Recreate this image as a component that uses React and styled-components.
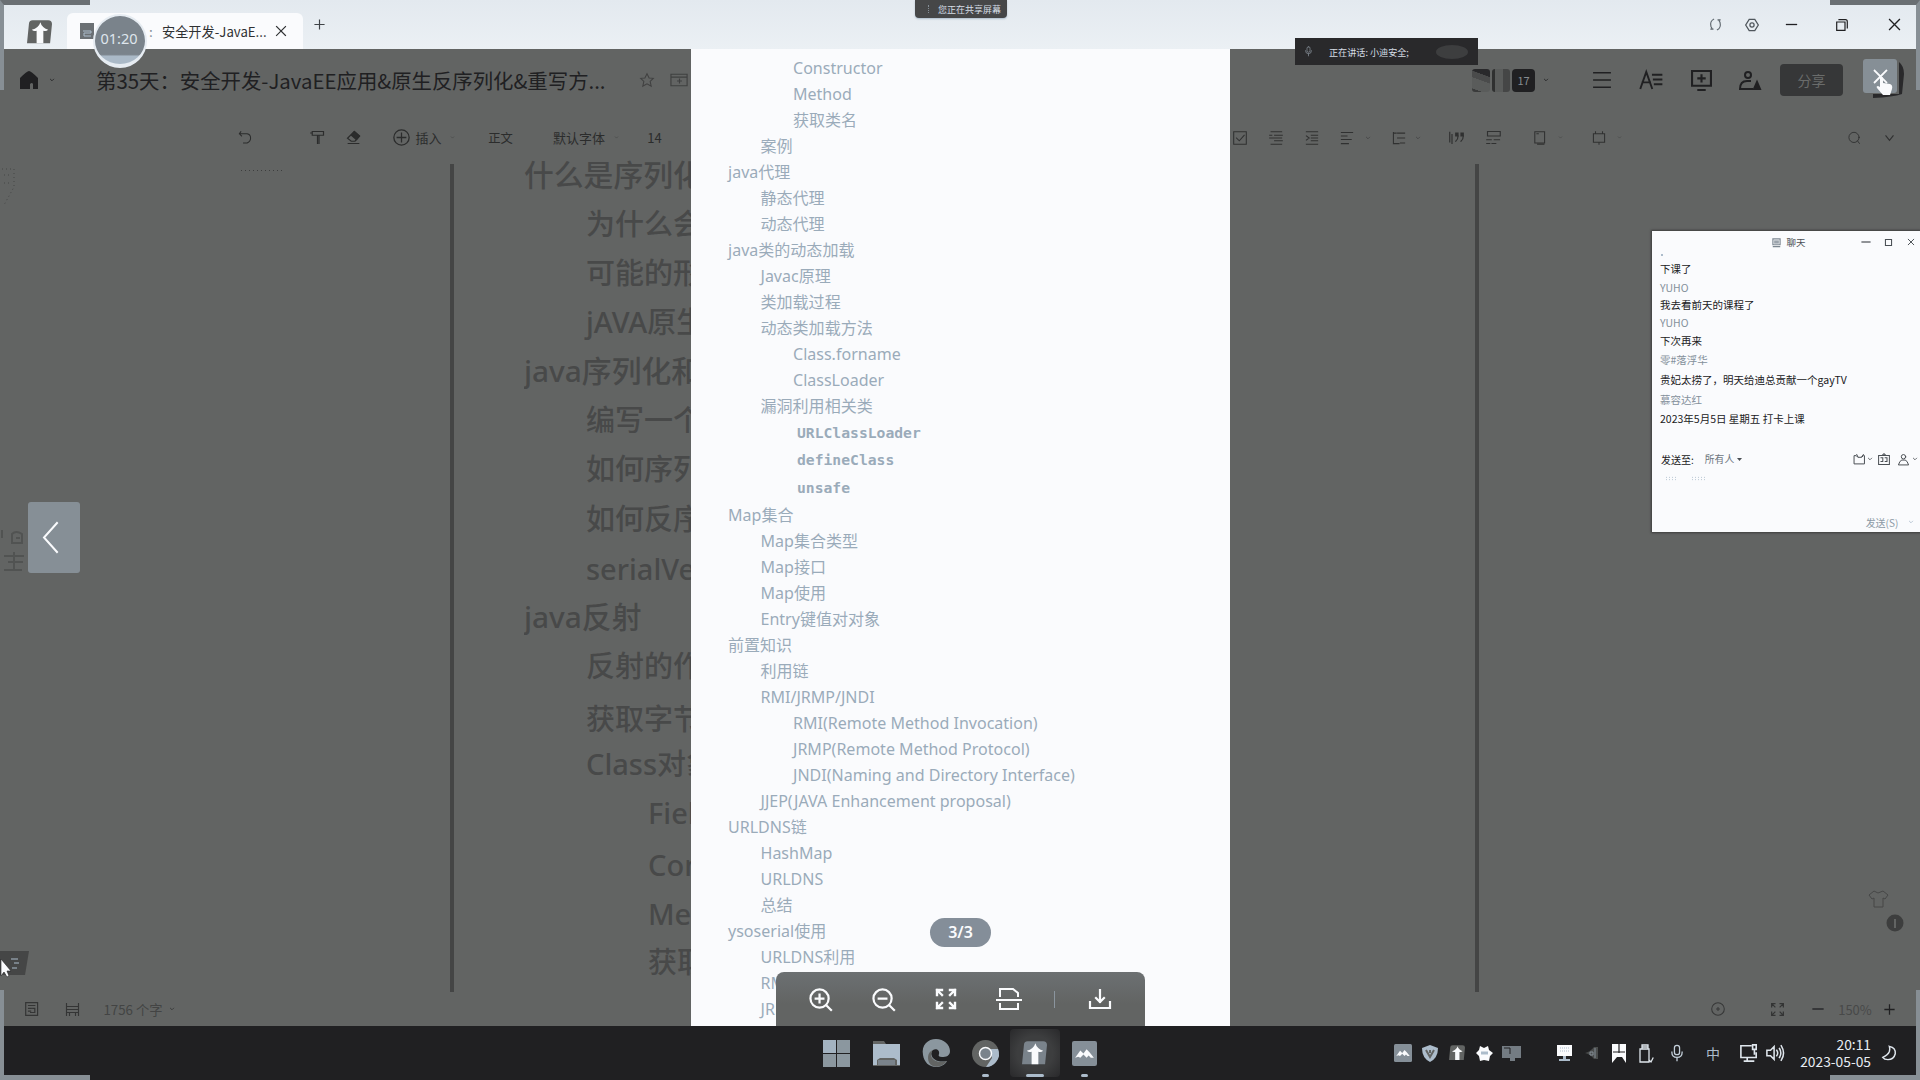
import React from "react";
import styled, { createGlobalStyle } from "styled-components";

const INK = "#202022";
const GRAY = "#626463";
const MIST = "#acbccb";
const PAPER = "#fafbfd";

const GlobalStyle = createGlobalStyle`
  * { box-sizing: border-box; }
  html, body { margin: 0; padding: 0; overflow: hidden; }
  body { font-family: "Noto Sans", "Noto Sans CJK SC", sans-serif; color: ${INK}; }
  svg { display: block; flex: none; overflow: visible; }
`;

const Screen = styled.div`
  position: relative;
  width: 1920px;
  height: 1080px;
  overflow: hidden;
  display: grid;
  grid-template-rows: 49px 977px 54px;
  background: ${GRAY};
`;

const Slot = styled.span`
  flex: none;
  display: flex;
  align-items: center;
  justify-content: ${(p) => p.$align || "center"};
  width: ${(p) => p.$w}px;
  margin-left: ${(p) => p.$gap || 0}px;
  font-size: ${(p) => p.$size || 13}px;
  color: ${(p) => p.$color || "inherit"};
  white-space: nowrap;
`;

const TitleBar = styled.header`
  display: flex;
  align-items: flex-start;
  background: linear-gradient(#e3e9ef, #ebf0f4);
`;

const AppLogo = styled.div`
  margin: 20px 0 0 27px;
  width: 25px;
`;

const Tab = styled.div`
  margin: 13px 0 0 15px;
  width: 236px;
  height: 36px;
  padding-left: 13px;
  display: flex;
  align-items: center;
  border-radius: 6px 6px 0 0;
  background: ${PAPER};
  color: #2f3133;
  font-family: "Noto Sans CJK SC", sans-serif;
`;

const TitleTools = styled.div`
  display: flex;
  align-items: center;
  height: 49px;
  margin-left: ${(p) => p.$gap}px;
`;

const Workspace = styled.main`
  display: grid;
  grid-template-columns: 691px 539px 690px;
  min-height: 0;
`;

const Pane = styled.section`
  display: grid;
  grid-template-rows: 62px 53px 828px 34px;
  overflow: hidden;
  min-width: 0;
  font-family: "Noto Sans CJK SC", sans-serif;
`;

const Bar = styled.div`
  display: flex;
  align-items: center;
  padding-left: ${(p) => p.$pad}px;
  color: ${(p) => p.$color || INK};
`;

const DocBody = styled.div`
  display: flex;
  margin-left: ${(p) => p.$left}px;
  border-left: 4px solid #444545;
`;

const Outline = styled.div`
  flex: 1;
  min-width: 0;
  padding: 0 0 0 70px;
  margin-top: -14px;
`;

const OutlineRow = styled.div`
  height: 49px;
  line-height: 49px;
  padding-top: ${(p) => p.$drop || 0}px;
  padding-left: ${(p) => p.$level * 62}px;
  font-family: "Noto Sans", "Noto Sans CJK SC", sans-serif;
  font-size: ${(p) => (p.$level ? 29 : 29.8)}px;
  font-weight: 500;
  color: #484949;
  white-space: nowrap;
  overflow: hidden;
`;

const Sheet = styled.section`
  position: relative;
  background: ${PAPER};
  overflow: hidden;
  padding: 5.5px 0 0 37px;
`;

const TocRow = styled.div`
  height: ${(p) => (p.$code ? (p.$first ? 27 : 28) : 26)}px;
  line-height: ${(p) => (p.$code ? (p.$first ? 27 : 28) : 26)}px;
  padding-left: ${(p) => p.$level * 32.5 + (p.$code ? 4 : 0)}px;
  font-family: ${(p) =>
    p.$code
      ? '"DejaVu Sans Mono", monospace'
      : '"Noto Sans", "Noto Sans CJK SC", sans-serif'};
  font-size: ${(p) => (p.$code ? 14.7 : 16.05)}px;
  font-weight: ${(p) => (p.$code ? 700 : 400)};
  color: #9aabba;
  white-space: nowrap;
`;

const PageBadge = styled.div`
  position: absolute;
  left: 239px;
  top: 869px;
  width: 61px;
  height: 29px;
  line-height: 29px;
  border-radius: 15px;
  text-align: center;
  background: #848e99;
  color: ${PAPER};
  font-size: 16px;
  font-weight: 600;
`;

const ViewerBar = styled.div`
  position: absolute;
  left: 85px;
  bottom: 0;
  width: 369px;
  height: 54px;
  padding-left: 32px;
  display: flex;
  align-items: center;
  border-radius: 8px 8px 0 0;
  background: linear-gradient(#6c7072, ${GRAY} 60%);
  color: ${PAPER};
`;

const Divider = styled.span`
  flex: none;
  width: 1px;
  height: 17px;
  margin-left: 32px;
  background: #8b959e;
`;

const CountBox = styled.span`
  flex: none;
  width: 23px;
  height: 23px;
  line-height: 22px;
  border-radius: 4px;
  text-align: center;
  font-size: 11px;
  background: ${INK};
  color: #858b90;
`;

const Avatar = styled.span`
  flex: none;
  width: 18px;
  height: 23px;
  margin-right: 2px;
  border-radius: 3px;
  background: ${(p) => p.$fill};
`;

const ShareButton = styled.button`
  flex: none;
  width: 63px;
  height: 32px;
  margin-left: 19px;
  border: 0;
  padding: 0;
  border-radius: 4px;
  background: #363738;
  color: #6a6c6b;
  font: 14px "Noto Sans CJK SC", sans-serif;
`;

const OverlayButton = styled.button`
  position: absolute;
  left: ${(p) => p.$x}px;
  top: ${(p) => p.$y}px;
  width: ${(p) => p.$w}px;
  height: ${(p) => p.$h}px;
  padding: 0 ${(p) => p.$inset || 0}px 0 0;
  border: 0;
  border-radius: 3px;
  background: #868f96;
  color: ${PAPER};
  display: flex;
  align-items: center;
  justify-content: center;
`;

const Floating = styled.div`
  position: absolute;
  left: ${(p) => p.$x}px;
  top: ${(p) => p.$y}px;
`;

const Corner = styled.div`
  position: absolute;
  width: 90px;
  height: 90px;
  border: 0 solid #878f95;
  ${(p) => (p.$top ? "top: 0; border-top-width: 5px; border-top-color: #6a6f73;" : "bottom: 0; border-bottom-width: 5px;")}
  ${(p) => (p.$left ? "left: 0; border-left-width: 4px;" : "right: 0; border-right-width: 4px;")}
`;

const ShareNotice = styled.div`
  position: absolute;
  left: 915px;
  top: 0;
  width: 92px;
  height: 18px;
  padding-left: 13px;
  display: flex;
  align-items: center;
  gap: 7px;
  border-radius: 0 0 4px 4px;
  background: #464748;
  box-shadow: 0 1px 2px ${MIST};
  color: #d5dde5;
  font: 9px "Noto Sans CJK SC", sans-serif;
  white-space: nowrap;
`;

const NoticeDots = styled.span`
  flex: none;
  width: 3px;
  height: 8px;
  border-left: 1px dotted #858f98;
`;

const Speaker = styled.div`
  position: absolute;
  left: 1295px;
  top: 38px;
  width: 183px;
  height: 27px;
  padding-left: 8px;
  display: flex;
  align-items: center;
  background: #29292b;
  color: #d5dde5;
  font-family: "Noto Sans CJK SC", sans-serif;
`;

const Voice = styled.span`
  width: 32px;
  height: 14px;
  margin-left: 27px;
  border-radius: 50%;
  background: #3d3e3f;
`;

const Timer = styled.div`
  position: absolute;
  left: 93px;
  top: 14px;
  width: 54px;
  height: 54px;
  padding: 0 2px 4px 0;
  display: flex;
  align-items: center;
  justify-content: center;
  border: 2px solid #e6ecf2;
  border-bottom-width: 4px;
  border-radius: 50%;
  background: linear-gradient(#7a838b 80%, #aab9c7 84%);
  color: #dfe6ed;
  font-size: 14.5px;
`;

const Chat = styled.aside`
  position: absolute;
  left: 1652px;
  top: 231px;
  width: 268px;
  height: 301px;
  padding-left: 8px;
  background: ${PAPER};
  box-shadow: 0 0 2px 1px #3c3d3d;
  font-family: "Noto Sans CJK SC", sans-serif;
`;

const ChatHead = styled.div`
  position: relative;
  display: flex;
  align-items: center;
  height: 22px;
  padding-left: 111px;
  color: #4a4f54;
`;

const ChatLine = styled.p`
  margin: 0;
  height: ${(p) => p.$h || 18}px;
  line-height: ${(p) => p.$h || 18}px;
  font-size: 10.5px;
  color: ${(p) => (p.$name ? "#84909b" : INK)};
  white-space: nowrap;
`;

const ChatLog = styled.div`
  height: 194px;
`;

const Crumb = styled.div`
  width: 2px;
  height: 2px;
  margin: 1px 0 3px 1px;
  background: ${MIST};
`;

const ChatTools = styled.div`
  display: flex;
  align-items: center;
  height: 22px;
  color: #4a4f54;
`;

const Placeholder = styled.div`
  display: flex;
  gap: 14px;
  height: 41px;
  padding: 6px 0 0 5px;
`;

const Faint = styled.span`
  width: ${(p) => p.$w}px;
  height: 5px;
  background: radial-gradient(${MIST} 0.7px, transparent 1px) 0 0 / 3px 2.5px;
`;

const Taskbar = styled.footer`
  display: flex;
  align-items: center;
  background: ${INK};
  padding-left: 812px;
`;

const TaskApp = styled.span`
  position: relative;
  flex: none;
  width: 49.5px;
  height: 48px;
  display: flex;
  align-items: center;
  justify-content: center;
  border-radius: 4px;
  background: ${(p) => (p.$active ? "radial-gradient(#3d3e3f 50%, #29292b)" : "none")};
  &::after {
    content: "";
    position: absolute;
    bottom: 0;
    width: ${(p) => p.$mark || 0}px;
    height: 3px;
    border-radius: 2px;
    background: ${MIST};
  }
`;

const Tray = styled.div`
  display: flex;
  align-items: center;
  margin-left: 280px;
  color: #dfe6ed;
`;

const Clock = styled.div`
  width: 76px;
  margin-left: 11px;
  text-align: right;
  font: 13.8px/17px "Noto Sans CJK SC", sans-serif;
  color: #e8eef4;
`;

const Icon = ({ w = 20, h, vb, sw = 1.5, fill = "none", children }) => (
  <svg
    width={w}
    height={h || w}
    viewBox={vb || "0 0 20 20"}
    fill={fill}
    stroke="currentColor"
    strokeWidth={sw}
    strokeLinecap="square"
  >
    {children}
  </svg>
);

const Caret = ({ w = 5 }) => (
  <Icon w={w} vb="0 0 10 10" sw={2}>
    <path d="M1 3l4 4 4-4" />
  </Icon>
);

const Cross = ({ w = 10, sw = 1.4 }) => (
  <Icon w={w} vb="0 0 10 10" sw={sw}>
    <path d="M.5.5l9 9M9.5.5l-9 9" />
  </Icon>
);

const Mark = ({ w = 25, box = GRAY }) => (
  <svg width={w} height={w * 0.94} viewBox="0 0 26 24">
    <path d="M6 0h16q4 0 4 4l-2 20H0L2 4q0-4 4-4z" fill={box} />
    <path d="M14 2q1 5 8 8-2 2-5 1v13h-7V11q-3 1-5-1 7-2 9-8z" fill={PAPER} />
  </svg>
);

const Peaks = ({ w = 25 }) => (
  <svg width={w} height={w} viewBox="0 0 24 24">
    <rect width="24" height="24" rx="2" fill="#858f98" />
    <path d="M3 16l5-7 3 3 3-4 3 3 4 5h-3l-2-2-2 2-3-3-3 3-2-1z" fill={PAPER} />
  </svg>
);

const Mic = ({ w = 14 }) => (
  <Icon w={w} h={w * 1.5} vb="0 0 14 20">
    <rect x="4" y="1" width="6" height="11" rx="3" />
    <path d="M1 9q0 6 6 6t6-6M7 15v4" />
  </Icon>
);

const outline = [
  ["什么是序列化", 0],
  ["为什么会有", 1],
  ["可能的形式", 1],
  ["jAVA原生", 1],
  ["java序列化和", 0],
  ["编写一个", 1],
  ["如何序列化", 1],
  ["如何反序列化", 1, 1],
  ["serialVersion", 1, 2],
  ["java反射", 0, 1],
  ["反射的作用", 1, 1],
  ["获取字节码", 1, 5],
  ["Class对象", 1, 1],
  ["Field", 2, 1],
  ["Constructor", 2, 4],
  ["Method", 2, 4],
  ["获取类名", 2, 3],
];

const toc = [
  ["Constructor", 2],
  ["Method", 2],
  ["获取类名", 2],
  ["案例", 1],
  ["java代理", 0],
  ["静态代理", 1],
  ["动态代理", 1],
  ["java类的动态加载", 0],
  ["Javac原理", 1],
  ["类加载过程", 1],
  ["动态类加载方法", 1],
  ["Class.forname", 2],
  ["ClassLoader", 2],
  ["漏洞利用相关类", 1],
  ["URLClassLoader", 2, "first"],
  ["defineClass", 2, "code"],
  ["unsafe", 2, "code"],
  ["Map集合", 0],
  ["Map集合类型", 1],
  ["Map接口", 1],
  ["Map使用", 1],
  ["Entry键值对对象", 1],
  ["前置知识", 0],
  ["利用链", 1],
  ["RMI/JRMP/JNDI", 1],
  ["RMI(Remote Method Invocation)", 2],
  ["JRMP(Remote Method Protocol)", 2],
  ["JNDI(Naming and Directory Interface)", 2],
  ["JJEP(JAVA Enhancement proposal)", 1],
  ["URLDNS链", 0],
  ["HashMap", 1],
  ["URLDNS", 1],
  ["总结", 1],
  ["ysoserial使用", 0],
  ["URLDNS利用", 1],
  ["RMI", 1],
  ["JRMP", 1],
];

const chat = [
  ["下课了", false, 20],
  ["YUHO", true, 17],
  ["我去看前天的课程了", false, 18],
  ["YUHO", true, 18],
  ["下次再来", false, 18],
  ["零#落浮华", true, 20],
  ["贵妃太捞了，明天给迪总贡献一个gayTV", false, 20],
  ["慕容达红", true, 19],
  ["2023年5月5日 星期五 打卡上课", false, 20],
];

function Title() {
  return (
    <TitleBar>
      <AppLogo><Mark w={25} /></AppLogo>
      <Tab>
        <Slot $w={14}>
          <svg width="14" height="16" viewBox="0 0 14 16">
            <path d="M0 0h14v16H0z" fill="#6b7074" />
            <path d="M3 8h8v2H4v3h7" stroke={MIST} fill="none" />
          </svg>
        </Slot>
        <Slot $w={4} $gap={55} $size={13.5} $color="#848e98">:</Slot>
        <Slot $w={108} $gap={9} $align="flex-start" $size={13.2}>安全开发-JavaE...</Slot>
        <Slot $w={11} $gap={5}><Cross w={10} sw={1.1} /></Slot>
      </Tab>
      <TitleTools $gap={11}>
        <Slot $w={10} $color="#3f4347">
          <Icon w={9} vb="0 0 10 10" sw={1.3}><path d="M5 0v10M0 5h10" /></Icon>
        </Slot>
      </TitleTools>
      <TitleTools $gap={1384}>
        <Slot $w={14} $color="#5f676e">
          <Icon w={13} sw={1.8}><path d="M7 2Q1 5 3 13l2 4M3 17h3M13 18q6-3 4-11l-2-4M17 3h-3" /></Icon>
        </Slot>
        <Slot $w={14} $gap={23} $color="#4f565c">
          <Icon w={14} sw={1.8}><path d="M6 2h8l5 8-5 8H6l-5-8z" /><circle cx="10" cy="10" r="3" /></Icon>
        </Slot>
        <Slot $w={12} $gap={26}>
          <Icon w={11} vb="0 0 11 11" sw={1.3}><path d="M.5 5.5h10" /></Icon>
        </Slot>
        <Slot $w={12} $gap={39}>
          <Icon w={12} vb="0 0 12 12" sw={1.2}><path d="M.7 3h8.300v8.300H.7zM3 .7h6.500q1.800 0 1.800 2V9" /></Icon>
        </Slot>
        <Slot $w={12} $gap={40}><Cross w={11} sw={1.2} /></Slot>
      </TitleTools>
    </TitleBar>
  );
}

function LeftPane() {
  return (
    <Pane>
      <Bar $pad={20}>
        <Slot $w={18}>
          <svg width="18" height="18" viewBox="0 0 18 18">
            <path d="M9 0q2 0 9 7v11h-5v-5q-1-2-3 0v5H0V7q7-7 9-7z" fill={INK} />
          </svg>
        </Slot>
        <Slot $w={4} $gap={12}><Caret w={4} /></Slot>
        <Slot $w={512} $gap={42} $align="flex-start" $size={20.4}>第35天：安全开发-JavaEE应用&amp;原生反序列化&amp;重写方...</Slot>
        <Slot $w={16} $gap={31} $color="#404141">
          <Icon w={14} sw={1.5}><path d="M10 1l3 6 6 .6-4.500 4.400L16 19l-6-3.500L4 19l1.500-7L1 7.600 7 7z" /></Icon>
        </Slot>
        <Slot $w={20} $gap={14} $color="#3f4040">
          <Icon w={19} h={14} vb="0 0 20 14" sw={1.2}><path d="M1 1h17v12H1zM1 4h17M8 8h4M10 6v4" /></Icon>
        </Slot>
      </Bar>
      <Bar $pad={238} $color="#2b2c2c">
        <Slot $w={14}>
          <Icon w={14} sw={1.5}><path d="M4 1L2 4l3 3M2 4h11q5 1 5 6t-5 7H8" /></Icon>
        </Slot>
        <Slot $w={16} $gap={57}>
          <Icon w={15} sw={1.6}><path d="M3 2h15v5H3zM1 4h2M10 7v11M12 8v10" /></Icon>
        </Slot>
        <Slot $w={16} $gap={20}>
          <Icon w={15} sw={1.6}><path d="M11 2l7 6-6 7H7l-5-4zM3 18h14" /><path d="M11 2l7 6-4 5-7-6z" fill="currentColor" /></Icon>
        </Slot>
        <Slot $w={18} $gap={31}>
          <Icon w={17} sw={1.5}><circle cx="10" cy="10" r="9" /><path d="M10 5v10M5 10h10" /></Icon>
        </Slot>
        <Slot $w={27} $gap={5}>插入</Slot>
        <Slot $w={4} $gap={8} $color="#434444"><Caret w={3} /></Slot>
        <Slot $w={27} $gap={33} $size={12.3}>正文</Slot>
        <Slot $w={54} $gap={38}>默认字体</Slot>
        <Slot $w={4} $gap={8} $color="#434444"><Caret w={3} /></Slot>
        <Slot $w={15} $gap={29}>14</Slot>
      </Bar>
      <DocBody $left={450}>
        <Outline>
          {outline.map(([text, level, drop], i) => (
            <OutlineRow key={i} $level={level} $drop={drop}>{text}</OutlineRow>
          ))}
        </Outline>
      </DocBody>
      <Bar $pad={25} $color="#343535">
        <Slot $w={14}>
          <Icon w={14} sw={1.7}><path d="M1 1h17v18H1zM5 5h9M5 9h4M11 9h3v6H8M5 13h3" /></Icon>
        </Slot>
        <Slot $w={15} $gap={26}>
          <Icon w={15} sw={1.5}><path d="M2 2v16M18 2v16M2 6h16M2 10h16M2 14h16M6 14v4M14 14v4" /></Icon>
        </Slot>
        <Slot $w={62} $gap={22} $size={13.3} $color="#434444">1756 个字</Slot>
        <Slot $w={5} $gap={5}><Caret w={4} /></Slot>
      </Bar>
    </Pane>
  );
}

function PreviewSheet() {
  return (
    <Sheet>
      {toc.map(([text, level, kind], i) => (
        <TocRow key={i} $level={level} $code={!!kind} $first={kind === "first"}>{text}</TocRow>
      ))}
      <PageBadge>3/3</PageBadge>
      <ViewerBar>
        <Slot $w={24}>
          <Icon w={23} vb="0 0 24 24" sw={2.3}><circle cx="11" cy="11" r="9.500" /><path d="M18 18l5 5M11 7v8M7 11h8" /></Icon>
        </Slot>
        <Slot $w={24} $gap={39}>
          <Icon w={23} vb="0 0 24 24" sw={2.3}><circle cx="11" cy="11" r="9.500" /><path d="M18 18l5 5M7 11h8" /></Icon>
        </Slot>
        <Slot $w={24} $gap={39}>
          <Icon w={22} vb="0 0 22 22" sw={2.4}>
            <path d="M2 7V2h5M2 2l5 5M20 7V2h-5M20 2l-5 5M2 15v5h5M2 20l5-5M20 15v5h-5M20 20l-5-5" />
          </Icon>
        </Slot>
        <Slot $w={26} $gap={38}>
          <Icon w={26} h={22} vb="0 0 26 22" sw={2}>
            <path d="M4 8V1h13l5 4v3M1 12h24M4 16v5h18v-5" />
          </Icon>
        </Slot>
        <Divider />
        <Slot $w={24} $gap={33}>
          <Icon w={22} vb="0 0 22 22" sw={2.2}><path d="M11 2v12M7 10l4 4 4-4M1 14v6h20v-6" /></Icon>
        </Slot>
      </ViewerBar>
    </Sheet>
  );
}

function RightPane() {
  return (
    <Pane>
      <Bar $pad={242}>
        <Avatar $fill="linear-gradient(20deg, #3a3b3b 12%, #5a5c5b 13% 50%, #4a4b4b 51% 72%, #29292b 73%)" />
        <Avatar $fill="linear-gradient(90deg, #2f3030 18%, #5a5c5b 19% 60%, #454646 61%)" />
        <CountBox>17</CountBox>
        <Slot $w={6} $gap={8}><Caret w={4} /></Slot>
        <Slot $w={20} $gap={43}>
          <Icon w={18} sw={1.8}><path d="M1 2h18M1 10h18M1 18h18" /></Icon>
        </Slot>
        <Slot $w={24} $gap={27}>
          <Icon w={24} h={18} vb="0 0 24 19" sw={2}><path d="M1 18L7 1l6 17M3 12h8M14 4h9M15 9h8M16 14h7" /></Icon>
        </Slot>
        <Slot $w={22} $gap={27}>
          <Icon w={21} sw={2}><path d="M1 1h18v14H1zM7 19h6M10 5v6M7 8h6" /></Icon>
        </Slot>
        <Slot $w={23} $gap={26}>
          <Icon w={22} h={19} vb="0 0 22 19" sw={2}><circle cx="9" cy="4" r="3" /><path d="M13 18H1q0-8 7-8h3" /><path d="M18 11l3 7h-6z" fill="currentColor" /></Icon>
        </Slot>
        <ShareButton>分享</ShareButton>
      </Bar>
      <Bar $pad={3} $color="#303131">
        <Slot $w={14}><Icon w={14}><path d="M1 1h18v18H1zM5 10l4 4 7-8" /></Icon></Slot>
        <Slot $w={14} $gap={22}><Icon w={14}><path d="M3 1h15M8 6h11M1 10h17M8 14h11M3 19h15M1 6h3" /></Icon></Slot>
        <Slot $w={14} $gap={22}><Icon w={14}><path d="M2 1h16M9 6h9M9 10h9M9 14h9M2 19h16M2 7l4 3-4 3" /></Icon></Slot>
        <Slot $w={14} $gap={21}><Icon w={14}><path d="M2 2h16M2 7h8M2 12h14M2 18h10" /></Icon></Slot>
        <Slot $w={4} $gap={12} $color="#434444"><Caret w={4} /></Slot>
        <Slot $w={14} $gap={22}><Icon w={14}><path d="M2 2v16h8M2 3h4M8 3h10M8 10h10M12 17h6" /></Icon></Slot>
        <Slot $w={4} $gap={10} $color="#434444"><Caret w={4} /></Slot>
        <Slot $w={16} $gap={28}>
          <Icon w={15} sw={1.6}><path d="M1 3v13M4 6v12M12 8q0 5-3 7M19 8q0 5-3 7" /><path d="M9 4h3v4H9zM16 4h3v4h-3z" fill="currentColor" /></Icon>
        </Slot>
        <Slot $w={16} $gap={21}><Icon w={15}><path d="M2 2h17v6H2zM1 13h6M11 13h7M1 18h4M8 18h5" /></Icon></Slot>
        <Slot $w={14} $gap={31}><Icon w={14}><path d="M4 1h14v16H4zM7 4h2M8 19h9" /></Icon></Slot>
        <Slot $w={4} $gap={12} $color="#434444"><Caret w={3} /></Slot>
        <Slot $w={14} $gap={30}><Icon w={14}><path d="M2 4h16v12H2zM5 3V1M15 3V1M10 16v3" /></Icon></Slot>
        <Slot $w={4} $gap={11} $color="#434444"><Caret w={3} /></Slot>
        <Slot $w={14} $gap={226}><Icon w={12}><circle cx="10" cy="9" r="8.500" /><path d="M16 15l3 4" /></Icon></Slot>
        <Slot $w={12} $gap={22}><Icon w={9} h={6} vb="0 0 10 6" sw={1.3}><path d="M1 .5l4 5 4-5" /></Icon></Slot>
      </Bar>
      <DocBody $left={245} />
      <Bar $pad={480}>
        <Slot $w={16} $color="#363737"><Icon w={14} sw={1.5}><circle cx="10" cy="10" r="9" /><path d="M10 8v4M8 10h4" /></Icon></Slot>
        <Slot $w={16} $gap={43} $color="#333434">
          <Icon w={13} sw={1.9}><path d="M1 6V1h5M14 1h5v5M1 14v5h5M19 14v5h-5M2 2l4 4M18 2l-4 4M2 18l4-4M18 18l-4-4" /></Icon>
        </Slot>
        <Slot $w={12} $gap={27}><Icon w={10} vb="0 0 10 10" sw={1.3}><path d="M0 5h10" /></Icon></Slot>
        <Slot $w={34} $gap={14} $color="#484949">150%</Slot>
        <Slot $w={12} $gap={11}><Icon w={9} vb="0 0 10 10" sw={1.4}><path d="M5 0v10M0 5h10" /></Icon></Slot>
      </Bar>
    </Pane>
  );
}

function ChatWindow() {
  return (
    <Chat>
      <ChatHead>
        <Slot $w={10} $color="#7c8791">
          <Icon w={9} sw={2.6}><path d="M2 2h16v13H2zM6 7h8M6 11h8M3 19h14" /></Icon>
        </Slot>
        <Slot $w={20} $gap={5} $size={9.5}>聊天</Slot>
        <Slot $w={10} $gap={55}><Icon w={8} vb="0 0 10 10" sw={1.5}><path d="M0 5h10" /></Icon></Slot>
        <Slot $w={8} $gap={13}><Icon w={7} vb="0 0 8 8" sw={1.2}><path d="M.5.5h7v7h-7z" /></Icon></Slot>
        <Slot $w={8} $gap={15}><Cross w={6} sw={1.6} /></Slot>
      </ChatHead>
      <ChatLog>
        <Crumb />
        {chat.map(([text, name, h], i) => (
          <ChatLine key={i} $name={name} $h={h}>{text}</ChatLine>
        ))}
      </ChatLog>
      <ChatTools>
        <Slot $w={34} $gap={1} $size={10} $align="flex-start" $color={INK}>发送至:</Slot>
        <Slot $w={31} $gap={9} $size={9.8} $color="#6d767e">所有人</Slot>
        <Slot $w={5} $gap={2}>
          <svg width="5" height="3" viewBox="0 0 5 3"><path d="M0 0h5L2.500 3z" fill="#4a4f54" /></svg>
        </Slot>
        <Slot $w={12} $gap={111}><Icon w={11} sw={1.8}><path d="M1 3h3l3 3h7l3-3h2v15H1zM5 1l2 4M17 1l-3 4" /></Icon></Slot>
        <Slot $w={5} $gap={2}><Caret w={4} /></Slot>
        <Slot $w={12} $gap={6}><Icon w={12} sw={1.7}><path d="M1 4h18v15H1zM7 4l3-3 3 3M5 8h3v6H5M12 8h3v6h-3" /></Icon></Slot>
        <Slot $w={12} $gap={7}><Icon w={11} sw={1.8}><circle cx="10" cy="5" r="4" /><path d="M1 19q2-7 6-8h6q4 1 6 8z" /></Icon></Slot>
        <Slot $w={5} $gap={3}><Caret w={4} /></Slot>
      </ChatTools>
      <Placeholder><Faint $w={12} /><Faint $w={15} /></Placeholder>
      <ChatTools>
        <Slot $w={34} $gap={205} $size={10} $color="#8d9aa6">发送(S)</Slot>
        <Slot $w={5} $gap={9} $color={MIST}><Caret w={4} /></Slot>
      </ChatTools>
    </Chat>
  );
}

function BottomBar() {
  return (
    <Taskbar>
      <TaskApp>
        <svg width="27" height="27" viewBox="0 0 27 27">
          <path d="M0 0h13v13H0z" fill="#a3b3c1" />
          <path d="M14 0h13v13H14zM0 14h13v13H0zM14 14h13v13H14z" fill="#8b979f" />
        </svg>
      </TaskApp>
      <TaskApp>
        <svg width="27" height="25" viewBox="0 0 27 25">
          <path d="M0 0h11l2 3h14v22H0z" fill={GRAY} />
          <path d="M0 3h27v21h-3v-5l-3-2H7l-3 2v5H0z" fill={MIST} />
          <path d="M5 19h17v5H5z" fill="#7a838b" />
        </svg>
      </TaskApp>
      <TaskApp>
        <svg width="28" height="28" viewBox="0 0 28 28">
          <path d="M1 16C-1 6 6 0 14 0c8 0 14 6 14 12 0 5-4 6-8 6-3 0-4-1-3-3 1-4-3-6-6-4-4 3-1 14 14 11-2 4-7 6-11 6C7 28 2 23 1 16z" fill="#8b979f" />
          <path d="M11 11c-5 4-1 15 14 11-5 7-13 7-17 3-3-4-3-12 3-14z" fill={GRAY} />
        </svg>
      </TaskApp>
      <TaskApp $mark={7}>
        <svg width="27" height="27" viewBox="0 0 27 27">
          <circle cx="13.5" cy="13.500" r="13.500" fill={GRAY} />
          <path d="M18 9h8q3 7-2 13-4 5-10 5l6-9z" fill={MIST} />
          <circle cx="13.5" cy="13.500" r="6" fill="#7a838b" stroke={PAPER} strokeWidth="1.500" />
        </svg>
      </TaskApp>
      <TaskApp $active $mark={18}><Mark w={25} box="#7a838b" /></TaskApp>
      <TaskApp $mark={7}><Peaks w={25} /></TaskApp>
      <Tray>
        <Slot $w={18} $gap={5}><Peaks w={18} /></Slot>
        <Slot $w={18} $gap={9}>
          <svg width="16" height="17" viewBox="0 0 16 17">
            <path d="M8 0l8 3q0 10-8 14Q0 13 0 3z" fill={MIST} />
            <path d="M4 5l4 7 4-7M8 5v3" stroke={GRAY} strokeWidth="2" fill="none" />
          </svg>
        </Slot>
        <Slot $w={18} $gap={9}><Mark w={16} /></Slot>
        <Slot $w={18} $gap={9}>
          <svg width="17" height="17" viewBox="0 0 17 17">
            <path d="M4 1l4 2 4-2 1 4 4 3-3 3-1 5-5-1-4 1-1-5-3-3 3-3z" fill={PAPER} />
            <path d="M5 8h7" stroke={MIST} strokeWidth="3" />
          </svg>
        </Slot>
        <Slot $w={19} $gap={9}>
          <svg width="19" height="15" viewBox="0 0 19 15">
            <path d="M0 0h19v12h-6v3H8v-3H0z" fill="#747c83" />
            <path d="M2 2h6v6" stroke={INK} fill="none" />
          </svg>
        </Slot>
        <Slot $w={18} $gap={34}>
          <svg width="17" height="16" viewBox="0 0 17 16">
            <path d="M1 0h15v11H1z" fill={PAPER} />
            <path d="M7 11h3v3h4v2H3v-2h4z" fill={MIST} />
            <path d="M4 3h9M4 6h9" stroke={MIST} strokeDasharray="1 1" />
          </svg>
        </Slot>
        <Slot $w={14} $gap={11} $color={GRAY}>
          <svg width="13" height="12" viewBox="0 0 13 12">
            <path d="M0 6q5-1 9-6h4v12H9Q5 7 0 6z" fill="#4a4c4c" />
            <path d="M5 5h3v3H5zM10 1v10" stroke="#858f98" fill="none" />
          </svg>
        </Slot>
        <Slot $w={16} $gap={13}>
          <svg width="14" height="19" viewBox="0 0 14 19">
            <path d="M0 0h14v19l-4-6H5l-5 6z" fill={PAPER} />
            <path d="M7 0v9M1 8h12" stroke={INK} strokeWidth="1.200" />
          </svg>
        </Slot>
        <Slot $w={14} $gap={12}>
          <Icon w={14} h={19} vb="0 0 14 19" sw={1.3}><path d="M3 5V1h6v4M1 5h9v13H1zM10 16l2 2 2-4M4 3h4" /></Icon>
        </Slot>
        <Slot $w={14} $gap={17} $color="#c3cfda"><Mic w={12} /></Slot>
        <Slot $w={16} $gap={21} $size={14} $color={MIST}>中</Slot>
        <Slot $w={18} $gap={19}>
          <Icon w={18} sw={1.8}><path d="M12 2H1v13h17V10M5 19h10M8 15v4M14 1h4v5h-4zM16 6v5" /></Icon>
        </Slot>
        <Slot $w={18} $gap={8}>
          <Icon w={18} sw={1.7}><path d="M1 7v6h4l4 4V3L5 7zM12 7q2 3 0 6M15 5q3 5 0 10M17 2q5 8 0 16" /></Icon>
        </Slot>
        <Clock>20:11<br />2023-05-05</Clock>
        <Slot $w={16} $gap={10}>
          <Icon w={14} h={16} vb="0 0 19 20" sw={2}><path d="M10 1q9 2 8 10-2 8-10 8-5 0-7-3 7-3 9-8 1-4 0-7z" /></Icon>
        </Slot>
      </Tray>
    </Taskbar>
  );
}

export default function App() {
  return (
    <Screen>
      <GlobalStyle />
      <Title />
      <Workspace>
        <LeftPane />
        <PreviewSheet />
        <RightPane />
      </Workspace>
      <BottomBar />
      <Corner $top $left />
      <Corner $top />
      <Corner $left />
      <Corner />
      <Timer>01:20</Timer>
      <ShareNotice><NoticeDots />您正在共享屏幕</ShareNotice>
      <Speaker>
        <Slot $w={10} $color="#858f98"><Mic w={7} /></Slot>
        <Slot $w={80} $gap={16} $size={9.1} $align="flex-start">正在讲话: 小迪安全;</Slot>
        <Voice />
      </Speaker>
      <OverlayButton $x={28} $y={502} $w={52} $h={71} $inset={6}>
        <Icon w={16} h={31} vb="0 0 16 31" sw={2}><path d="M14 1L1 15.500 14 30" /></Icon>
      </OverlayButton>
      <Floating $x={1873} $y={62}>
        <svg width="33" height="36" viewBox="0 0 33 36">
          <path d="M26 0q5 4 5 12l-2 20q-9 3-29 4v-4h26z" fill="#29292b" />
        </svg>
      </Floating>
      <OverlayButton $x={1863} $y={59} $w={34} $h={34}><Cross w={13} sw={1.4} /></OverlayButton>
      <Floating $x={1876} $y={76}>
        <svg width="17" height="20" viewBox="0 0 17 20">
          <path d="M4 1q2-1 3 1v5l7 1q3 1 2 5l-2 6H7L1 12q-1-2 1-2l2 1z" fill={PAPER} />
        </svg>
      </Floating>
      <ChatWindow />
      <Floating $x={0} $y={951}>
        <svg width="29" height="26" viewBox="0 0 29 26">
          <path d="M0 0h29l-4 24H0z" fill="#454646" />
          <path d="M11 8h7M14 12h5M12 17h5" stroke={MIST} />
          <path d="M1 8v17l3-4 3 5 2-1-2-5h4z" fill={PAPER} stroke={INK} strokeWidth=".6" />
        </svg>
      </Floating>
      <Floating $x={1869} $y={890}>
        <svg width="36" height="42" viewBox="0 0 36 42" fill="none">
          <path d="M5 1l4 2 5-2 5 4-3 4-2-1v9H5V8L3 9 0 5z" stroke="#464747" />
          <circle cx="26" cy="33" r="8.500" fill="#3d3e3e" />
          <path d="M26 29v9" stroke={GRAY} strokeWidth="2" />
        </svg>
      </Floating>
      <Floating $x={0} $y={528}>
        <svg width="25" height="46" viewBox="0 0 25 46" fill="none" stroke="#515352" strokeWidth="2">
          <path d="M12 6q4-4 10 0v9H12zM16 10h4M4 28h20M8 34h15M4 42h18M14 24v18M2 2v8" />
        </svg>
      </Floating>
      <Floating $x={0} $y={165}>
        <svg width="18" height="43" viewBox="0 0 18 43" fill="none" stroke="#454646" strokeDasharray="1 3">
          <path d="M2 4h12v18L4 40M4 10h8M4 18h8" />
        </svg>
      </Floating>
      <Floating $x={241} $y={170}>
        <svg width="43" height="1" viewBox="0 0 43 1" stroke="#3d3e3e" strokeDasharray="1 3">
          <path d="M0 .5h43" />
        </svg>
      </Floating>
    </Screen>
  );
}
